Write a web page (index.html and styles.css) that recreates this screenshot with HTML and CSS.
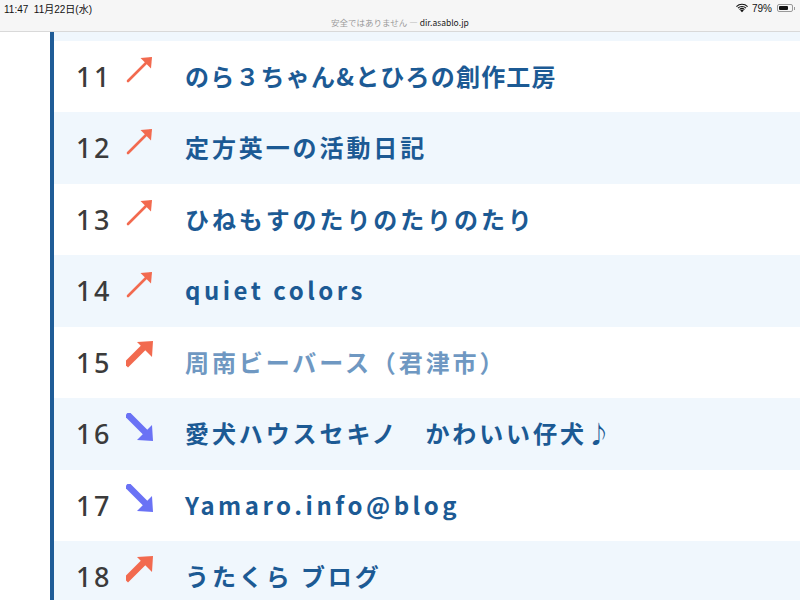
FILE: index.html
```html
<!DOCTYPE html>
<html lang="ja">
<head>
<meta charset="utf-8">
<link rel="stylesheet" href="styles.css">
</head>
<body>
<div class="status">
  <div class="status-top">
    <span class="time">11:47&nbsp;&nbsp;11月22日(水)</span>
    <span class="sys">
      <svg class="wifi" width="13" height="10" viewBox="0 0 13 10"><path d="M6.5 9.6 4.6 7.6a2.7 2.7 0 0 1 3.8 0Z" fill="#111"/><path d="M3.4 6.4a4.4 4.4 0 0 1 6.2 0l-0.9 0.9a3.1 3.1 0 0 0-4.4 0Z" fill="#111"/><path d="M1.7 4.7a6.8 6.8 0 0 1 9.6 0l-0.9 0.9a5.5 5.5 0 0 0-7.8 0Z" fill="#111"/><path d="M0 3a9.2 9.2 0 0 1 13 0l-0.9 0.9a7.9 7.9 0 0 0-11.2 0Z" fill="#111"/></svg>
      <span class="pct">79%</span>
      <span class="battery"><span class="level"></span></span><span class="nub"></span>
    </span>
  </div>
  <div class="url">安全ではありません — <span class="host">dir.asablo.jp</span></div>
</div>
<div class="viewport">
  <ol class="ranking">
    <li class="row alt"></li>
    <li class="row">
      <span class="num">11</span>
      <svg class="arrow" viewBox="0 0 28 28"><path d="M2 26 24 4" stroke="#f26a4f" stroke-width="2.6" stroke-linecap="round"/><path d="M14.5 3 26 2 25 13.5Z" fill="#f26a4f"/></svg>
      <a class="name tight">のら３ちゃん&amp;とひろの創作工房</a>
    </li>
    <li class="row alt">
      <span class="num">12</span>
      <svg class="arrow" viewBox="0 0 28 28"><path d="M2 26 24 4" stroke="#f26a4f" stroke-width="2.6" stroke-linecap="round"/><path d="M14.5 3 26 2 25 13.5Z" fill="#f26a4f"/></svg>
      <a class="name">定方英一の活動日記</a>
    </li>
    <li class="row">
      <span class="num">13</span>
      <svg class="arrow" viewBox="0 0 28 28"><path d="M2 26 24 4" stroke="#f26a4f" stroke-width="2.6" stroke-linecap="round"/><path d="M14.5 3 26 2 25 13.5Z" fill="#f26a4f"/></svg>
      <a class="name">ひねもすのたりのたりのたり</a>
    </li>
    <li class="row alt">
      <span class="num">14</span>
      <svg class="arrow" viewBox="0 0 28 28"><path d="M2 26 24 4" stroke="#f26a4f" stroke-width="2.6" stroke-linecap="round"/><path d="M14.5 3 26 2 25 13.5Z" fill="#f26a4f"/></svg>
      <a class="name latin">quiet colors</a>
    </li>
    <li class="row">
      <span class="num">15</span>
      <svg class="arrow" viewBox="0 0 28 28"><path d="M2 22 18 6" stroke="#f26a4f" stroke-width="6.5" stroke-linecap="square"/><path d="M11 1 27 0 26 16Z" fill="#f26a4f"/></svg>
      <a class="name visited">周南ビーバース（君津市）</a>
    </li>
    <li class="row alt">
      <span class="num">16</span>
      <svg class="arrow" viewBox="0 0 28 28"><path d="M3 3 19 19" stroke="#6a72f5" stroke-width="6.5" stroke-linecap="square"/><path d="M11 27 27 28 26 12Z" fill="#6a72f5"/></svg>
      <a class="name">愛犬ハウスセキノ　かわいい仔犬♪</a>
    </li>
    <li class="row">
      <span class="num">17</span>
      <svg class="arrow" viewBox="0 0 28 28"><path d="M3 3 19 19" stroke="#6a72f5" stroke-width="6.5" stroke-linecap="square"/><path d="M11 27 27 28 26 12Z" fill="#6a72f5"/></svg>
      <a class="name latin">Yamaro.info@blog</a>
    </li>
    <li class="row alt">
      <span class="num">18</span>
      <svg class="arrow" viewBox="0 0 28 28"><path d="M2 22 18 6" stroke="#f26a4f" stroke-width="6.5" stroke-linecap="square"/><path d="M11 1 27 0 26 16Z" fill="#f26a4f"/></svg>
      <a class="name">うたくら ブログ</a>
    </li>
  </ol>
</div>
</body>
</html>
```
FILE: styles.css
```css
html, body {
  margin: 0;
  padding: 0;
  width: 800px;
  height: 600px;
  overflow: hidden;
  background: #fff;
  font-family: "Noto Sans CJK JP", "Noto Sans", sans-serif;
}
.status {
  height: 31px;
  background: #f6f6f6;
  border-bottom: 1px solid #d9d9d9;
  position: relative;
  z-index: 1;
}
.status-top {
  display: flex;
  justify-content: space-between;
  align-items: center;
  height: 14px;
  padding: 1px 5px 0 4px;
  font-size: 10px;
  color: #111;
  font-family: "Liberation Sans", "Noto Sans CJK JP", sans-serif;
}
.sys { display: flex; align-items: center; gap: 4px; }
.wifi { width: 12px; height: 10px; }
.pct { margin-right: 1px; }
.battery {
  width: 16px;
  height: 8px;
  border: 1px solid #999;
  border-radius: 2px;
  padding: 1px;
  box-sizing: border-box;
  display: flex;
}
.level { width: 78%; background: #111; border-radius: 1px; }
.nub { width: 1px; height: 3px; background: #999; margin-left: -3px; }
.url {
  text-align: center;
  font-size: 8.5px;
  color: #9a9a9a;
  line-height: 13px;
  margin-top: 1px;
}
.host { color: #222; }
.viewport {
  height: 568px;
  overflow: hidden;
}
.ranking {
  list-style: none;
  margin: -63px 0 0 50px;
  padding: 0;
  border-left: 4px solid #1f5c97;
}
.row {
  height: 71.5px;
  display: flex;
  align-items: center;
  background: #fff;
}
.row.alt { background: #f0f7fd; }
.num {
  width: 72px;
  padding-left: 22px;
  box-sizing: border-box;
  font-size: 27px;
  font-weight: 500;
  color: #3b3b3b;
  letter-spacing: 2.5px;
  font-family: "Noto Sans", sans-serif;
}
.arrow {
  width: 28px;
  height: 28px;
  flex: none;
  margin-bottom: 14px;
}
.name {
  margin-left: 31px;
  margin-bottom: 2px;
  font-size: 24px;
  font-weight: 700;
  color: #1c5a94;
  letter-spacing: 2.9px;
  white-space: nowrap;
}
.name.tight { letter-spacing: 1.2px; }
.name.latin { letter-spacing: 3.5px; }
.name.visited { color: #6f98c2; }
```
